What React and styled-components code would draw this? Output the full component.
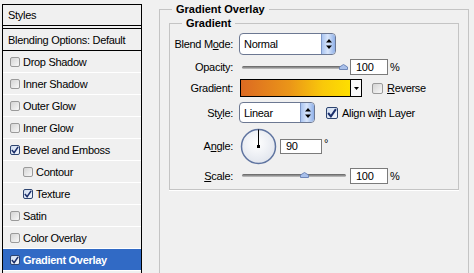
import React from "react";
import styled, { createGlobalStyle } from "styled-components";

const Global = createGlobalStyle`
  html, body { margin: 0; padding: 0; background: #f0f0f0; overflow: hidden; }
  body {
    font-family: "Liberation Sans", Arial, sans-serif;
    font-size: 11px;
    letter-spacing: -0.3px;
    color: #000;
  }
  * { box-sizing: border-box; }
`;

const Page = styled.div`
  display: flex;
  align-items: flex-start;
  gap: 17px;
  padding-left: 2px;
  width: 474px;
  height: 273px;
  overflow: hidden;
`;

const StylesPanel = styled.div`
  width: 140px;
  margin-top: 4px;
  border: 1px solid #000;
  border-bottom: none;
  height: 269px;
  background: #f0f0f0;
`;

const Header = styled.div`
  height: 21px;
  display: flex;
  align-items: center;
  padding-left: 5px;
  border-bottom: 1px solid #000;
`;

const Blending = styled.div`
  height: 23px;
  margin-top: 2px;
  display: flex;
  align-items: center;
  padding-left: 5px;
  border-top: 1px solid #000;
  border-bottom: 1px solid #000;
`;

const Item = styled.div`
  height: 22px;
  display: flex;
  align-items: center;
  gap: 3px;
  padding-left: ${(p) => (p.$indent ? 20 : 7)}px;
  border-bottom: 1px solid #fff;
  background: ${(p) => (p.$selected ? "#316ac5" : "transparent")};
  color: ${(p) => (p.$selected ? "#fff" : "#000")};
  font-weight: ${(p) => (p.$selected ? "bold" : "normal")};
`;

const Box = styled.span`
  position: relative;
  display: inline-flex;
  align-items: center;
  justify-content: center;
  flex-shrink: 0;
  width: ${(p) => p.$size}px;
  height: ${(p) => p.$size}px;
  border: 1px solid ${(p) => (p.$checked ? "#2d4470" : "#9a9a9a")};
  border-radius: 2px;
  background: ${(p) =>
    p.$checked
      ? "linear-gradient(135deg, #cfdcf0, #f4f7fc)"
      : "linear-gradient(135deg, #d4d4d4, #f8f8f8)"};
`;

const Check = ({ checked, size = 10 }) => (
  <Box $checked={checked} $size={size}>
    {checked && (
      <svg width={size - 2} height={size - 2} viewBox="0 0 9 9">
        <path d="M1 4.5 L3.5 7.5 L8 1" fill="none" stroke="#1b2f6b" strokeWidth="1.8" />
      </svg>
    )}
  </Box>
);

const Group = styled.fieldset`
  margin: ${(p) => (p.$outer ? "2px 0 0 0" : "0")};
  padding: ${(p) => (p.$outer ? "0 8px 0 9px" : "0 0 5px 0")};
  width: ${(p) => (p.$outer ? "310px" : "290px")};
  min-height: ${(p) => (p.$outer ? "300px" : "auto")};
  border: 1px solid #c4c4c4;
  box-shadow: ${(p) => (p.$outer ? "none" : "0 1px 0 #fff")};
`;

const Legend = styled.legend`
  font-weight: bold;
  letter-spacing: 0;
  line-height: 14px;
  padding: 0 4px;
  margin-left: ${(p) => p.$indent}px;
`;

const Row = styled.div`
  display: flex;
  align-items: center;
  height: ${(p) => p.$h}px;
  margin-top: ${(p) => p.$mt || 0}px;
`;

const Label = styled.span`
  width: 63px;
  flex-shrink: 0;
  text-align: right;
  margin-right: 6px;
`;

const Select = styled.div`
  display: flex;
  width: ${(p) => p.$w}px;
  height: ${(p) => p.$h}px;
  background: #fff;
  border: 1px solid #6c7892;
  border-radius: 4px;
  overflow: hidden;
`;

const SelectValue = styled.span`
  flex: 1;
  display: flex;
  align-items: center;
  padding-left: 4px;
`;

const Spin = styled.span`
  width: 14px;
  display: flex;
  flex-direction: column;
  align-items: center;
  justify-content: center;
  gap: 2px;
  border-left: 1px solid #7d97c8;
  border-radius: 0 3px 3px 0;
  background: linear-gradient(90deg, #a9c4f0, #d9e6fb 45%, #8fb0e8);
`;

const SpinArrows = () => (
  <svg width="6" height="10" viewBox="0 0 6 10">
    <path d="M3 0 L6 3.5 L0 3.5 Z M3 10 L6 6.5 L0 6.5 Z" fill="#000" />
  </svg>
);

const SliderTrack = styled.div`
  position: relative;
  width: 104px;
  height: 3px;
  margin-left: 3px;
  border-radius: 2px;
  background: linear-gradient(#5f5f5f, #9a9a9a 60%, #c8c8c8);
`;

const Thumb = styled.svg`
  position: absolute;
  top: -2px;
  left: ${(p) => p.$x - 4}px;
`;

const Slider = ({ at }) => (
  <SliderTrack>
    <Thumb $x={at} width="9" height="6" viewBox="0 0 9 6">
      <path d="M4.5 0.5 L8.5 3 L8.5 5.5 L0.5 5.5 L0.5 3 Z" fill="#a9c0ea" stroke="#6f87b8" />
    </Thumb>
  </SliderTrack>
);

const Input = styled.div`
  width: ${(p) => p.$w}px;
  height: ${(p) => p.$h}px;
  margin-left: ${(p) => p.$ml}px;
  display: flex;
  align-items: center;
  padding-left: 5px;
  background: #fff;
  border: 1px solid #7b7b7b;
`;

const Unit = styled.span`
  margin-left: 2px;
  align-self: ${(p) => (p.$top ? "flex-start" : "center")};
  margin-top: ${(p) => (p.$top ? 9 : 0)}px;
`;

const Swatch = styled.div`
  display: flex;
  width: 122px;
  height: 18px;
  margin-left: 1px;
  border: 1px solid #000;
`;

const Ramp = styled.div`
  flex: 1;
  background: linear-gradient(90deg, #dc6a22 0%, #eb9618 45%, #f9c80a 75%, #fedf00 100%);
`;

const Drop = styled.div`
  width: 11px;
  display: flex;
  align-items: center;
  justify-content: center;
  border-left: 1px solid #000;
  background: #fafafa;
`;

const CheckLabel = styled.label`
  display: flex;
  align-items: center;
  gap: 4px;
  margin-left: ${(p) => p.$ml}px;
`;

const Dial = styled.svg`
  margin-left: 1px;
  flex-shrink: 0;
`;

const layers = [
  { name: "Drop Shadow" },
  { name: "Inner Shadow" },
  { name: "Outer Glow" },
  { name: "Inner Glow" },
  { name: "Bevel and Emboss", checked: true },
  { name: "Contour", indent: true },
  { name: "Texture", indent: true, checked: true },
  { name: "Satin" },
  { name: "Color Overlay" },
  { name: "Gradient Overlay", checked: true, selected: true },
];

export default function App() {
  return (
    <>
      <Global />
      <Page>
        <StylesPanel>
          <Header>Styles</Header>
          <Blending>Blending Options: Default</Blending>
          {layers.map((l) => (
            <Item key={l.name} $indent={l.indent} $selected={l.selected}>
              <Check checked={l.checked} size={10} />
              <span>{l.name}</span>
            </Item>
          ))}
        </StylesPanel>

        <Group $outer>
          <Legend $indent={3}>Gradient Overlay</Legend>
          <Group>
            <Legend $indent={12}>Gradient</Legend>
            <Row $h={22} $mt={3}>
              <Label>
                Blend M<u>o</u>de:
              </Label>
              <Select $w={97} $h={22}>
                <SelectValue>Normal</SelectValue>
                <Spin>
                  <SpinArrows />
                </Spin>
              </Select>
            </Row>
            <Row $h={24}>
              <Label>Opacity:</Label>
              <Slider at={101} />
              <Input $w={38} $h={16} $ml={4}>100</Input>
              <Unit>%</Unit>
            </Row>
            <Row $h={18}>
              <Label>Gradient:</Label>
              <Swatch>
                <Ramp />
                <Drop>
                  <svg width="5" height="3" viewBox="0 0 5 3">
                    <path d="M0 0 L5 0 L2.5 3 Z" fill="#000" />
                  </svg>
                </Drop>
              </Swatch>
              <CheckLabel $ml={10}>
                <Check size={11} />
                <span>
                  <u>R</u>everse
                </span>
              </CheckLabel>
            </Row>
            <Row $h={21} $mt={5}>
              <Label>
                St<u>y</u>le:
              </Label>
              <Select $w={76} $h={21}>
                <SelectValue>Linear</SelectValue>
                <Spin>
                  <SpinArrows />
                </Spin>
              </Select>
              <CheckLabel $ml={11}>
                <Check size={12} checked />
                <span>
                  Align wi<u>t</u>h Layer
                </span>
              </CheckLabel>
            </Row>
            <Row $h={36} $mt={5}>
              <Label>
                A<u>n</u>gle:
              </Label>
              <Dial width="37" height="37" viewBox="0 0 37 37">
                <defs>
                  <radialGradient id="dialFill" cx="0.45" cy="0.4" r="0.6">
                    <stop offset="0" stopColor="#ffffff" />
                    <stop offset="1" stopColor="#e2e6ee" />
                  </radialGradient>
                </defs>
                <circle cx="18.5" cy="18.5" r="17" fill="url(#dialFill)" stroke="#5f74a0" strokeWidth="1.5" />
                <line x1="18.5" y1="18.5" x2="18.5" y2="1.5" stroke="#000" strokeWidth="1" />
                <rect x="17" y="17" width="3" height="3" fill="#000" />
              </Dial>
              <Input $w={42} $h={15} $ml={3}>90</Input>
              <Unit $top>°</Unit>
            </Row>
            <Row $h={17} $mt={3}>
              <Label>
                <u>S</u>cale:
              </Label>
              <Slider at={62} />
              <Input $w={38} $h={16} $ml={4}>100</Input>
              <Unit>%</Unit>
            </Row>
          </Group>
        </Group>
      </Page>
    </>
  );
}
